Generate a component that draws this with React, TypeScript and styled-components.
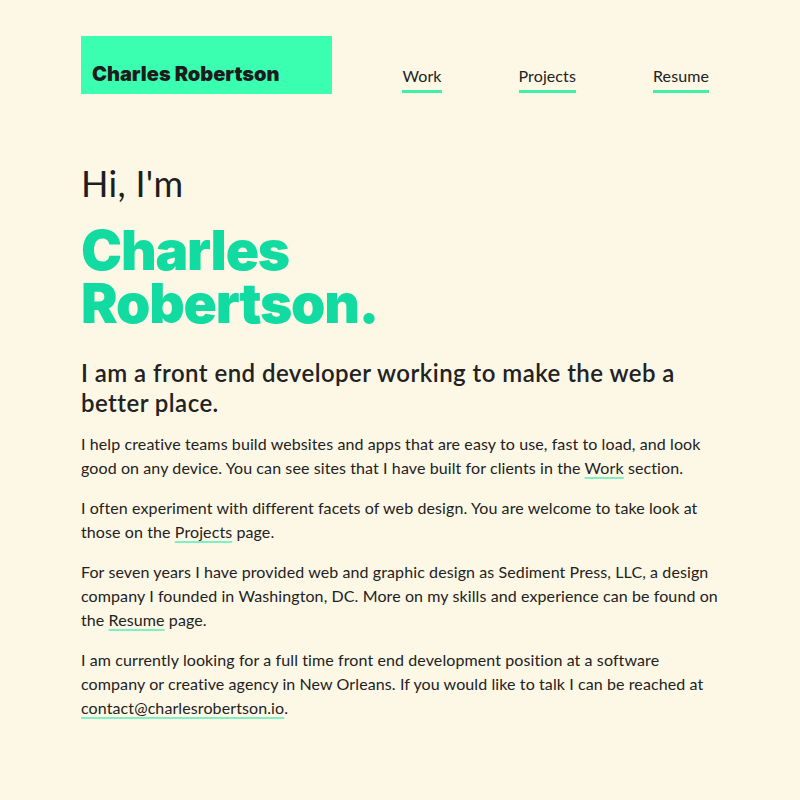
import React from "react";
import styled, { createGlobalStyle } from "styled-components";

const Global = createGlobalStyle`
  html, body { margin: 0; padding: 0; background: #fdf7e6; }
  body { font-family: Lato, "Open Sans", sans-serif; color: #222; }
`;

const Page = styled.div`
  width: 638px;
  margin: 0 auto;
  padding: 36px 0 40px;
`;

const Header = styled.header`
  display: flex;
  align-items: flex-start;
  justify-content: space-between;
`;

const Logo = styled.div`
  width: 251px;
  height: 58px;
  box-sizing: border-box;
  background: #3affb1;
  padding: 26px 0 0 11px;
  font-family: Inter, "Liberation Sans", sans-serif;
  font-weight: 900;
  font-size: 20px;
  letter-spacing: 0;
  color: #1c1c1c;
`;

const Nav = styled.nav`
  display: flex;
  gap: 77px;
  padding: 29px 10px 0 0;
`;

const NavLink = styled.a`
  font-size: 16px;
  line-height: 22px;
  letter-spacing: 0.1px;
  color: #222;
  text-decoration: none;
  padding-bottom: 3px;
  border-bottom: 3px solid #3ef0a8;
`;

const Hello = styled.h2`
  margin: 68px 0 0;
  font-size: 36px;
  line-height: 43px;
  font-weight: 400;
  letter-spacing: 0.3px;
  color: #1e1e1e;
`;

const Name = styled.h1`
  margin: 19px 0 0;
  font-family: Inter, "Liberation Sans", sans-serif;
  font-weight: 900;
  font-size: 55px;
  line-height: 53px;
  letter-spacing: -1.2px;
  color: #12dba1;
`;

const Lead = styled.h3`
  margin: 28px 0 0;
  font-size: 24px;
  line-height: 30px;
  font-weight: 600;
  letter-spacing: 0.45px;
  color: #222;
`;

const Para = styled.p`
  margin: 14px 0 0;
  font-size: 16px;
  line-height: 24px;
  letter-spacing: 0.1px;
  & + & { margin-top: 16px; }
`;

const InlineLink = styled.a`
  color: inherit;
  text-decoration: underline;
  text-decoration-color: #7ef0c4;
  text-decoration-thickness: 2px;
  text-underline-offset: 3px;
`;

export default function App() {
  return (
    <>
      <Global />
      <Page>
        <Header>
          <Logo>Charles Robertson</Logo>
          <Nav>
            <NavLink href="#">Work</NavLink>
            <NavLink href="#">Projects</NavLink>
            <NavLink href="#">Resume</NavLink>
          </Nav>
        </Header>
        <Hello>Hi, I'm</Hello>
        <Name>
          Charles
          <br />
          Robertson.
        </Name>
        <Lead>I am a front end developer working to make the web a better place.</Lead>
        <Para>
          I help creative teams build websites and apps that are easy to use, fast to load, and look good on any
          device. You can see sites that I have built for clients in the <InlineLink href="#">Work</InlineLink> section.
        </Para>
        <Para>
          I often experiment with different facets of web design. You are welcome to take look at those on the{" "}
          <InlineLink href="#">Projects</InlineLink> page.
        </Para>
        <Para>
          For seven years I have provided web and graphic design as Sediment Press, LLC, a design company I founded in
          Washington, DC. More on my skills and experience can be found on the <InlineLink href="#">Resume</InlineLink>{" "}
          page.
        </Para>
        <Para>
          I am currently looking for a full time front end development position at a software company or creative
          agency in New Orleans. If you would like to talk I can be reached at{" "}
          <InlineLink href="#">contact@charlesrobertson.io</InlineLink>.
        </Para>
      </Page>
    </>
  );
}
